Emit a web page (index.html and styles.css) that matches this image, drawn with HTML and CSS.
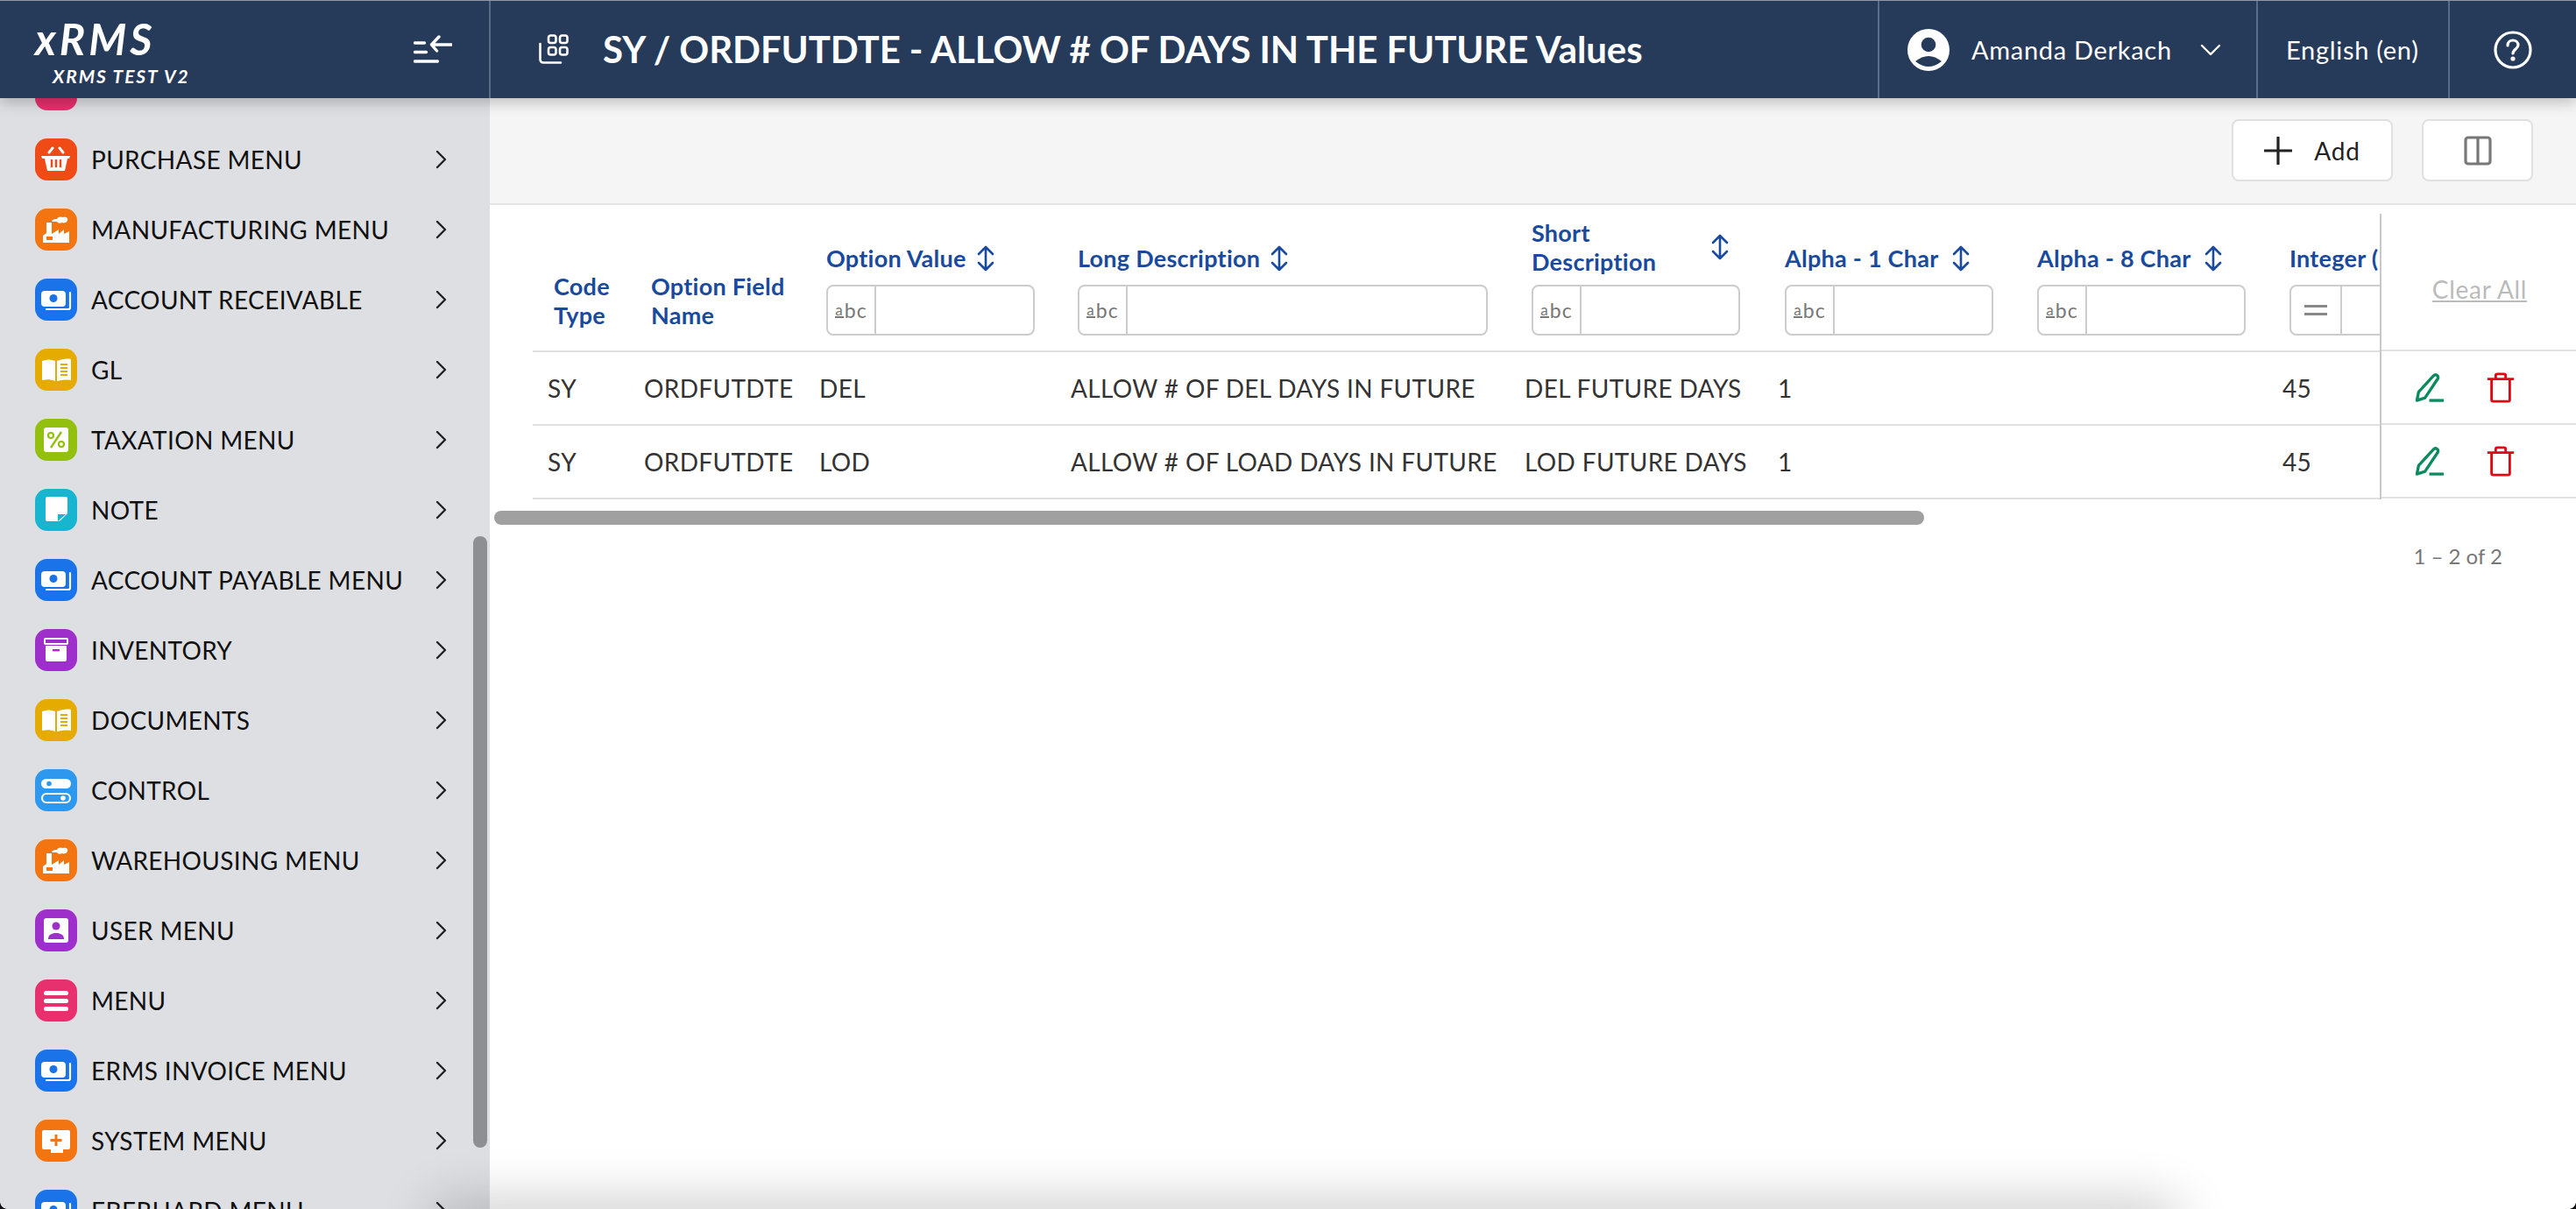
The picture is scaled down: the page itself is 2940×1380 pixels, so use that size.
FILE: index.html
```html
<!DOCTYPE html>
<html lang="en">
<head>
    <meta charset="UTF-8">
    <meta name="viewport" content="width=device-width, initial-scale=1.0">
    <title>SY / ORDFUTDTE Values</title>
    <link rel="stylesheet" href="styles.css">
</head>
<body>
    <svg class="sprite" xmlns="http://www.w3.org/2000/svg">
        <symbol id="i-basket" viewBox="0 0 48 48">
            <path d="M16 16l4-5M32 16l-4-5" stroke="#fff" stroke-width="3" stroke-linecap="round" fill="none"/>
            <path d="M7 20h33l-1 3h-2l-3 14H14l-3-14H8z" fill="#fff"/>
            <path d="M19 24v9M24 24v9M29 24v9" stroke="currentColor" stroke-width="2.4"/>
        </symbol>
        <symbol id="i-factory" viewBox="0 0 48 48">
            <path d="M9 39v-8l4-3V16h6v13l8-5v5l6-5v5l6-3v13z" fill="#fff"/>
            <rect x="13" y="32" width="7" height="4" fill="currentColor"/>
            <path d="M19 15c1-3 4-3 6-3 1-3 5-3 7-2 3-1 6 1 5 3 0 3-4 4-6 3-2 1-5 1-6-1-2 0-4 0-6 0z" fill="#fff"/>
        </symbol>
        <symbol id="i-money" viewBox="0 0 48 48">
            <rect x="7" y="14" width="28" height="18" rx="4" fill="#fff"/>
            <circle cx="21" cy="22.500" r="4.500" fill="currentColor"/>
            <path d="M40 16v17a2 2 0 0 1-2 2H13" stroke="#fff" stroke-width="2.200" fill="none" stroke-linecap="round"/>
        </symbol>
        <symbol id="i-book" viewBox="0 0 48 48">
            <path d="M8 14c5-2 10-2 15 0v23c-5-2-10-2-15-1z" fill="#fff"/>
            <path d="M25 14c5-2 11-3 16-2v24c-5-1-11 0-16 1z" fill="#fff"/>
            <path d="M29 18h8M29 22h8M29 26h8M29 30h8" stroke="currentColor" stroke-width="2"/>
        </symbol>
        <symbol id="i-percent" viewBox="0 0 48 48">
            <rect x="10" y="10" width="28" height="28" rx="3" fill="#fff"/>
            <circle cx="18" cy="19" r="3" fill="none" stroke="currentColor" stroke-width="2.200"/>
            <circle cx="30" cy="29" r="3" fill="none" stroke="currentColor" stroke-width="2.200"/>
            <path d="M30 15L18 33" stroke="currentColor" stroke-width="2.400"/>
        </symbol>
        <symbol id="i-note" viewBox="0 0 48 48">
            <path d="M14 9h21a2 2 0 0 1 2 2v17l-9 9H14a2 2 0 0 1-2-2V11a2 2 0 0 1 2-2z" fill="#fff"/>
            <path d="M26 29h9l-9 8z" fill="currentColor"/>
        </symbol>
        <symbol id="i-box" viewBox="0 0 48 48">
            <rect x="10" y="10" width="28" height="8" rx="2" fill="#fff"/>
            <rect x="12" y="12" width="24" height="4" fill="currentColor"/>
            <path d="M12 19h24v16a2 2 0 0 1-2 2H14a2 2 0 0 1-2-2z" fill="#fff"/>
            <rect x="20" y="23" width="8" height="2.400" fill="currentColor"/>
        </symbol>
        <symbol id="i-toggle" viewBox="0 0 48 48">
            <rect x="7" y="11" width="34" height="11" rx="5.500" fill="#fff"/>
            <circle cx="16" cy="16.500" r="2.800" fill="currentColor"/>
            <rect x="8" y="28" width="32" height="10" rx="5" fill="none" stroke="#fff" stroke-width="2.200"/>
            <circle cx="32" cy="33" r="2.800" fill="#fff"/>
        </symbol>
        <symbol id="i-user" viewBox="0 0 48 48">
            <rect x="10" y="10" width="28" height="28" rx="3" fill="#fff"/>
            <circle cx="24" cy="19" r="4.500" fill="currentColor"/>
            <path d="M15 34c0-5 4-7 9-7s9 2 9 7z" fill="currentColor"/>
        </symbol>
        <symbol id="i-bars" viewBox="0 0 48 48">
            <rect x="10" y="13" width="28" height="5" rx="2.500" fill="#fff"/>
            <rect x="10" y="22" width="28" height="5" rx="2.500" fill="#fff"/>
            <rect x="10" y="31" width="28" height="5" rx="2.500" fill="#fff"/>
        </symbol>
        <symbol id="i-plus-note" viewBox="0 0 48 48">
            <path d="M10 12h28a2 2 0 0 1 2 2v18a2 2 0 0 1-2 2h-6v4H18v-4h-8a2 2 0 0 1-2-2V14a2 2 0 0 1 2-2z" fill="#fff"/>
            <path d="M24 17v13M17.500 23.500h13" stroke="currentColor" stroke-width="3"/>
        </symbol>
        <symbol id="i-heart" viewBox="0 0 48 48">
            <path d="M14 0h20v8L24 18 14 8z" fill="#fff"/>
        </symbol>
        <symbol id="i-chevron" viewBox="0 0 16 24">
            <path d="M3 3l9 9-9 9" fill="none" stroke="currentColor" stroke-width="2.400" stroke-linecap="round" stroke-linejoin="round"/>
        </symbol>
        <symbol id="i-sort" viewBox="0 0 20 30">
            <path d="M10 2v26M2 10l8-8 8 8M2 20l8 8 8-8" fill="none" stroke="currentColor" stroke-width="2.600" stroke-linecap="round" stroke-linejoin="round"/>
        </symbol>
        <symbol id="i-pencil" viewBox="0 0 36 36">
            <path d="M2.500 33l2-10L22 4c2.500-2.500 6.500 0 5 3.500L12 30z" fill="none" stroke="currentColor" stroke-width="3.400" stroke-linejoin="round"/>
            <path d="M17 33h17" stroke="currentColor" stroke-width="3.400"/>
        </symbol>
        <symbol id="i-trash" viewBox="0 0 36 38">
            <path d="M2 9h32M7 9v25a2 2 0 0 0 2 2h18a2 2 0 0 0 2-2V9M12 9V5a2 2 0 0 1 2-2h8a2 2 0 0 1 2 2v4" fill="none" stroke="currentColor" stroke-width="3" stroke-linejoin="round"/>
        </symbol>
    </svg>

    <header class="topbar">
        <div class="brand">
            <div class="brand-text">
                <div class="logo">xRMS</div>
                <div class="logo-sub">XRMS TEST V2</div>
            </div>
            <svg class="collapse-icon" viewBox="0 0 44 32" fill="none" stroke="#fff" stroke-width="3.400" stroke-linecap="round" stroke-linejoin="round">
                <path d="M1.500 9h11M1.500 19.500h13M1.500 30h26"/>
                <path d="M43 11H21M29 2l-8.500 9 6 7"/>
            </svg>
        </div>
        <div class="page-title">
            <svg class="title-icon" viewBox="0 0 34 34" fill="none" stroke="#fff" stroke-width="2.600" stroke-linecap="round" stroke-linejoin="round">
                <rect x="11" y="1.500" width="8.500" height="8.500" rx="2.500"/>
                <rect x="24" y="1.500" width="8.500" height="8.500" rx="2.500"/>
                <rect x="11" y="15" width="8.500" height="8.500" rx="2.500"/>
                <rect x="24" y="15" width="8.500" height="8.500" rx="2.500"/>
                <path d="M1.500 11v18a3.500 3.500 0 0 0 3.500 3.500h20"/>
            </svg>
            <h1>SY / ORDFUTDTE - ALLOW # OF DAYS IN THE FUTURE Values</h1>
        </div>
        <div class="top-cell user-cell">
            <svg class="avatar" viewBox="0 0 48 48">
                <circle cx="24" cy="24" r="24" fill="#fff"/>
                <circle cx="24" cy="18" r="8.300" fill="#263a5a"/>
                <path d="M9 37Q24 25 39 37Q24 49 9 37z" fill="#263a5a"/>
            </svg>
            <span>Amanda Derkach</span>
            <svg class="user-chevron" viewBox="0 0 24 14" fill="none" stroke="#fff" stroke-width="2.400" stroke-linecap="round" stroke-linejoin="round"><path d="M2 2l10 10L22 2"/></svg>
        </div>
        <div class="top-cell lang-cell">English (en)</div>
        <div class="top-cell help-cell">
            <svg class="help-icon" viewBox="0 0 44 44" fill="none" stroke="#fff" stroke-width="3.200" stroke-linecap="round">
                <circle cx="22" cy="22" r="20"/>
                <path d="M16 17c0-4 3-6 6-6s6 2 6 5.500c0 4-6 5-6 9.500"/>
                <circle cx="22" cy="32" r="1" fill="#fff"/>
            </svg>
        </div>
    </header>

    <div class="layout">
        <nav class="sidebar">
            <ul class="menu">
                <li class="menu-row"><span class="menu-icon c-pink"><svg><use href="#i-heart"/></svg></span></li>
                <li class="menu-row"><span class="menu-icon c-red"><svg><use href="#i-basket"/></svg></span><span class="menu-label">PURCHASE MENU</span><svg class="chev"><use href="#i-chevron"/></svg></li>
                <li class="menu-row"><span class="menu-icon c-orange"><svg><use href="#i-factory"/></svg></span><span class="menu-label">MANUFACTURING MENU</span><svg class="chev"><use href="#i-chevron"/></svg></li>
                <li class="menu-row"><span class="menu-icon c-blue"><svg><use href="#i-money"/></svg></span><span class="menu-label">ACCOUNT RECEIVABLE</span><svg class="chev"><use href="#i-chevron"/></svg></li>
                <li class="menu-row"><span class="menu-icon c-yellow"><svg><use href="#i-book"/></svg></span><span class="menu-label">GL</span><svg class="chev"><use href="#i-chevron"/></svg></li>
                <li class="menu-row"><span class="menu-icon c-green"><svg><use href="#i-percent"/></svg></span><span class="menu-label">TAXATION MENU</span><svg class="chev"><use href="#i-chevron"/></svg></li>
                <li class="menu-row"><span class="menu-icon c-cyan"><svg><use href="#i-note"/></svg></span><span class="menu-label">NOTE</span><svg class="chev"><use href="#i-chevron"/></svg></li>
                <li class="menu-row"><span class="menu-icon c-blue"><svg><use href="#i-money"/></svg></span><span class="menu-label">ACCOUNT PAYABLE MENU</span><svg class="chev"><use href="#i-chevron"/></svg></li>
                <li class="menu-row"><span class="menu-icon c-purple"><svg><use href="#i-box"/></svg></span><span class="menu-label">INVENTORY</span><svg class="chev"><use href="#i-chevron"/></svg></li>
                <li class="menu-row"><span class="menu-icon c-yellow"><svg><use href="#i-book"/></svg></span><span class="menu-label">DOCUMENTS</span><svg class="chev"><use href="#i-chevron"/></svg></li>
                <li class="menu-row"><span class="menu-icon c-sky"><svg><use href="#i-toggle"/></svg></span><span class="menu-label">CONTROL</span><svg class="chev"><use href="#i-chevron"/></svg></li>
                <li class="menu-row"><span class="menu-icon c-orange"><svg><use href="#i-factory"/></svg></span><span class="menu-label">WAREHOUSING MENU</span><svg class="chev"><use href="#i-chevron"/></svg></li>
                <li class="menu-row"><span class="menu-icon c-purple"><svg><use href="#i-user"/></svg></span><span class="menu-label">USER MENU</span><svg class="chev"><use href="#i-chevron"/></svg></li>
                <li class="menu-row"><span class="menu-icon c-pink"><svg><use href="#i-bars"/></svg></span><span class="menu-label">MENU</span><svg class="chev"><use href="#i-chevron"/></svg></li>
                <li class="menu-row"><span class="menu-icon c-blue"><svg><use href="#i-money"/></svg></span><span class="menu-label">ERMS INVOICE MENU</span><svg class="chev"><use href="#i-chevron"/></svg></li>
                <li class="menu-row"><span class="menu-icon c-orange"><svg><use href="#i-plus-note"/></svg></span><span class="menu-label">SYSTEM MENU</span><svg class="chev"><use href="#i-chevron"/></svg></li>
                <li class="menu-row"><span class="menu-icon c-blue"><svg><use href="#i-money"/></svg></span><span class="menu-label">EBERHARD MENU</span><svg class="chev"><use href="#i-chevron"/></svg></li>
            </ul>
            <div class="side-scroll"></div>
        </nav>

        <main class="content">
            <div class="toolbar">
                <button class="tool-btn add-btn">
                    <svg class="plus-icon" viewBox="0 0 32 32" fill="none" stroke="#222" stroke-width="3.200" stroke-linecap="round"><path d="M16 1v30M1 16h30"/></svg>
                    <span>Add</span>
                </button>
                <button class="tool-btn col-btn">
                    <svg class="col-icon" viewBox="0 0 32 34" fill="none" stroke="#777" stroke-width="3.200"><rect x="2" y="2" width="28" height="30" rx="3"/><path d="M16 2v30"/></svg>
                </button>
            </div>

            <div class="grid-wrap">
                <div class="table-scroll">
                    <table class="data-table">
                        <colgroup>
                            <col class="w-code"><col class="w-field"><col class="w-value"><col class="w-long"><col class="w-short"><col class="w-alpha"><col class="w-alpha"><col class="w-int">
                        </colgroup>
                        <thead>
                            <tr>
                                <th class="th-plain">Code<br>Type</th>
                                <th class="th-plain">Option Field<br>Name</th>
                                <th>
                                    <div class="th-label">Option Value <svg class="sort"><use href="#i-sort"/></svg></div>
                                    <div class="filter"><span class="addon"><span class="abc"><u>a</u>bc</span></span><input type="text"></div>
                                </th>
                                <th>
                                    <div class="th-label">Long Description <svg class="sort"><use href="#i-sort"/></svg></div>
                                    <div class="filter filter-long"><span class="addon"><span class="abc"><u>a</u>bc</span></span><input type="text"></div>
                                </th>
                                <th>
                                    <div class="th-label th-label-wrap"><span>Short<br>Description</span> <svg class="sort"><use href="#i-sort"/></svg></div>
                                    <div class="filter"><span class="addon"><span class="abc"><u>a</u>bc</span></span><input type="text"></div>
                                </th>
                                <th>
                                    <div class="th-label th-label-alpha">Alpha - 1 Char <svg class="sort"><use href="#i-sort"/></svg></div>
                                    <div class="filter"><span class="addon"><span class="abc"><u>a</u>bc</span></span><input type="text"></div>
                                </th>
                                <th>
                                    <div class="th-label th-label-alpha">Alpha - 8 Char <svg class="sort"><use href="#i-sort"/></svg></div>
                                    <div class="filter"><span class="addon"><span class="abc"><u>a</u>bc</span></span><input type="text"></div>
                                </th>
                                <th>
                                    <div class="th-label">Integer (1)</div>
                                    <div class="filter"><span class="addon addon-eq"><span class="eq"></span></span><input type="text"></div>
                                </th>
                            </tr>
                        </thead>
                        <tbody>
                            <tr><td>SY</td><td>ORDFUTDTE</td><td>DEL</td><td>ALLOW # OF DEL DAYS IN FUTURE</td><td>DEL FUTURE DAYS</td><td>1</td><td></td><td>45</td></tr>
                            <tr><td>SY</td><td>ORDFUTDTE</td><td>LOD</td><td>ALLOW # OF LOAD DAYS IN FUTURE</td><td>LOD FUTURE DAYS</td><td>1</td><td></td><td>45</td></tr>
                        </tbody>
                    </table>
                </div>
                <div class="actions-col">
                    <div class="actions-head"><a class="clear-all">Clear All</a></div>
                    <div class="actions-row">
                        <svg class="pencil"><use href="#i-pencil"/></svg>
                        <svg class="trash"><use href="#i-trash"/></svg>
                    </div>
                    <div class="actions-row">
                        <svg class="pencil"><use href="#i-pencil"/></svg>
                        <svg class="trash"><use href="#i-trash"/></svg>
                    </div>
                </div>
            </div>
            <div class="h-scroll"></div>
            <div class="pager">1 – 2 of 2</div>
        </main>
    </div>
    <div class="bottom-shade"></div>
</body>
</html>
```

FILE: styles.css
```css
* {
    box-sizing: border-box;
}
html, body {
    margin: 0;
    height: 100%;
    overflow: hidden;
}
body {
    font-family: "Lato", "Noto Sans", sans-serif;
    font-size: 28px;
    letter-spacing: 0.35px;
    color: #333;
    background: #fff;
    display: flex;
    flex-direction: column;
}
.sprite {
    display: none;
}

/* window corners */
body::before, body::after {
    content: "";
    position: fixed;
    bottom: 0;
    width: 8px;
    height: 8px;
    z-index: 6;
}
body::before {
    left: 0;
    background: radial-gradient(circle at top right, transparent 7.5px, #111 8px);
}
body::after {
    right: 0;
    background: radial-gradient(circle at top left, transparent 7.5px, #111 8px);
}

/* top bar */
.topbar {
    height: 112px;
    flex: none;
    display: flex;
    background: #263a5a;
    border-top: 1px solid #8d97a8;
    color: #fff;
    box-shadow: 0 4px 16px rgba(0, 0, 0, 0.25);
    position: relative;
    z-index: 5;
}
.brand {
    width: 560px;
    flex: none;
    display: flex;
    align-items: center;
    justify-content: space-between;
    padding: 0 42px 0 40px;
    border-right: 2px solid #5b6b85;
}
.logo {
    font-size: 49px;
    line-height: 44px;
    letter-spacing: 4px;
    font-weight: 700;
    font-style: italic;
    margin-top: 8px;
}
.logo-sub {
    font-size: 21px;
    line-height: 26px;
    letter-spacing: 1.9px;
    font-weight: 700;
    font-style: italic;
    margin: 8px 0 0 20px;
}
.collapse-icon {
    width: 44px;
    height: 32px;
    margin-top: -1px;
}
.page-title {
    flex: 1;
    display: flex;
    align-items: center;
    padding-left: 55px;
    padding-bottom: 2px;
    gap: 39px;
}
.title-icon {
    width: 34px;
    height: 34px;
}
.page-title h1 {
    margin: 0;
    font-size: 42px;
    font-weight: 700;
    letter-spacing: -0.1px;
}
.top-cell {
    display: flex;
    align-items: center;
    border-left: 2px solid #5b6b85;
    font-size: 29px;
    letter-spacing: 0.7px;
}
.user-cell {
    width: 432px;
    padding-left: 32px;
}
.user-cell span {
    margin-left: 25px;
    width: 261px;
}
.avatar {
    width: 48px;
    height: 48px;
}
.user-chevron {
    width: 24px;
    height: 14px;
}
.lang-cell {
    width: 219px;
    padding-left: 32px;
}
.help-cell {
    width: 146px;
    padding-left: 50px;
}
.help-icon {
    width: 44px;
    height: 44px;
}

/* layout */
.layout {
    flex: 1;
    display: flex;
    min-height: 0;
}
.sidebar {
    width: 559px;
    flex: none;
    background: #dedfe3;
    overflow: hidden;
    position: relative;
}
.menu {
    list-style: none;
    margin: -50px 0 0;
    padding: 0;
}
.menu-row {
    height: 80px;
    display: flex;
    align-items: center;
    padding-left: 40px;
    color: #111;
}
.menu-icon {
    width: 48px;
    height: 48px;
    border-radius: 14px;
    flex: none;
    overflow: hidden;
}
.menu-icon svg {
    display: block;
    width: 48px;
    height: 48px;
}
.c-red { background: #f04a16; color: #f04a16; }
.c-orange { background: #f37512; color: #f37512; }
.c-blue { background: #1a73e8; color: #1a73e8; }
.c-yellow { background: #e5ab00; color: #e5ab00; }
.c-green { background: #93c00e; color: #93c00e; }
.c-cyan { background: #17b5cf; color: #17b5cf; }
.c-purple { background: #9f2fcb; color: #9f2fcb; }
.c-sky { background: #2e98ef; color: #2e98ef; }
.c-pink { background: #e7306e; color: #e7306e; }
.menu-label {
    margin-left: 16px;
    width: 392px;
    white-space: nowrap;
}
.chev {
    width: 16px;
    height: 24px;
    color: #222;
}
.side-scroll {
    position: absolute;
    top: 500px;
    right: 3px;
    width: 16px;
    height: 698px;
    border-radius: 8px;
    background: #8e8f92;
}

/* main */
.content {
    flex: 1;
    min-width: 0;
}
.toolbar {
    height: 122px;
    background: #f5f5f5;
    border-bottom: 2px solid #e4e4e4;
    display: flex;
    justify-content: flex-end;
    align-items: flex-start;
    padding: 24px 49px 0 0;
    gap: 33px;
}
.tool-btn {
    height: 71px;
    background: #fff;
    border: 2px solid #e0e0e0;
    border-radius: 8px;
    display: flex;
    align-items: center;
    justify-content: center;
    font-family: inherit;
    font-size: 28px;
    letter-spacing: 0.8px;
    color: #222;
    padding: 0;
}
.add-btn {
    width: 184px;
    gap: 25px;
}
.col-btn {
    width: 127px;
}
.plus-icon {
    width: 32px;
    height: 32px;
}
.col-icon {
    width: 32px;
    height: 34px;
}
.grid-wrap {
    display: flex;
    margin: 10px 0 0 49px;
}
.table-scroll {
    width: 2108px;
    flex: none;
    overflow: hidden;
}
.data-table {
    border-collapse: collapse;
    table-layout: fixed;
    width: 2342px;
}
.w-code { width: 111px; }
.w-field { width: 200px; }
.w-value { width: 287px; }
.w-long { width: 518px; }
.w-short { width: 289px; }
.w-alpha { width: 288px; }
.w-int { width: 361px; }
.data-table th {
    height: 157px;
    padding: 0 0 17px 24px;
    vertical-align: bottom;
    text-align: left;
    font-size: 27px;
    line-height: 33px;
    letter-spacing: 0.25px;
    font-weight: 700;
    color: #1a4a9c;
    border-bottom: 2px solid #e0e0e0;
}
.data-table .th-plain {
    padding-bottom: 24px;
}
.th-label {
    display: flex;
    align-items: center;
    gap: 12px;
    height: 33px;
    margin-bottom: 14px;
    white-space: nowrap;
}
.th-label-alpha {
    gap: 16px;
}
.th-label-wrap {
    width: 238px;
    height: 66px;
    justify-content: space-between;
    gap: 0;
    padding-right: 13px;
    margin-bottom: 10px;
}
.sort {
    width: 20px;
    height: 30px;
    color: #1a4a9c;
    flex: none;
}
.filter {
    width: 238px;
    height: 58px;
    display: flex;
    border: 2px solid #ccc;
    border-radius: 8px;
    background: #fff;
}
.filter-long {
    width: 468px;
}
.addon {
    width: 55px;
    flex: none;
    border-right: 2px solid #ccc;
    display: flex;
    align-items: center;
    justify-content: center;
    color: #777;
}
.addon-eq {
    width: 58px;
}
.eq {
    width: 26px;
    height: 12px;
    border-top: 3px solid #888;
    border-bottom: 3px solid #888;
}
.abc {
    font-size: 23px;
    line-height: 30px;
    font-weight: 400;
    letter-spacing: 1px;
}
.abc u {
    display: inline-block;
    font-size: 17px;
    line-height: 15px;
    text-decoration: none;
    border-bottom: 2px solid #777;
    margin-right: 1px;
    vertical-align: 3px;
}
.filter input {
    flex: 1;
    min-width: 0;
    border: none;
    background: none;
    outline: none;
}
.data-table td {
    height: 84px;
    padding: 0 0 0 16px;
    white-space: nowrap;
    border-bottom: 2px solid #e0e0e0;
}
.data-table td:first-child {
    padding-left: 17px;
}
.actions-col {
    flex: 1;
    border-left: 2px solid #c8c8c8;
}
.actions-head {
    height: 157px;
    display: flex;
    align-items: center;
    justify-content: center;
    padding: 16px 0 0 2px;
    border-bottom: 2px solid #e0e0e0;
}
.clear-all {
    color: #bbb;
    text-decoration: underline;
    letter-spacing: 0.7px;
}
.actions-row {
    height: 84px;
    display: flex;
    align-items: center;
    padding-left: 38px;
    gap: 46px;
    border-bottom: 2px solid #e0e0e0;
}
.pencil {
    width: 35px;
    height: 35px;
    color: #0b8a5e;
}
.trash {
    width: 34px;
    height: 36px;
    color: #e30613;
}
.h-scroll {
    width: 1632px;
    height: 16px;
    margin: 13px 0 0 5px;
    border-radius: 8px;
    background: #a0a0a0;
}
.pager {
    text-align: right;
    font-size: 24px;
    letter-spacing: 0;
    color: #777;
    margin: 21px 84px 0 0;
}
.bottom-shade {
    position: fixed;
    left: 500px;
    width: 1980px;
    bottom: -40px;
    height: 40px;
    border-radius: 30px;
    box-shadow: 0 0 60px 10px rgba(0, 0, 0, 0.2);
    z-index: 3;
}
```
